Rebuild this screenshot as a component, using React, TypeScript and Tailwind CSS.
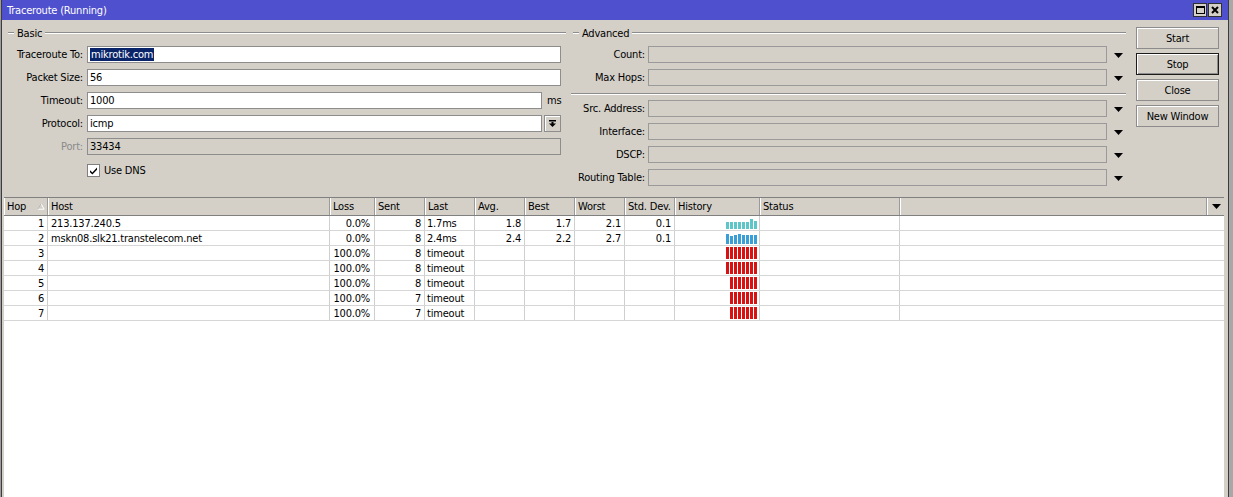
import React from 'react';

type Row = {
  hop: string;
  host: string;
  loss: string;
  sent: string;
  last: string;
  avg: string;
  best: string;
  worst: string;
  std: string;
  kind: 'cyan' | 'blue' | 'red';
  bars: number[];
};

const ROWS: Row[] = [
  { hop: '1', host: '213.137.240.5', loss: '0.0%', sent: '8', last: '1.7ms', avg: '1.8', best: '1.7', worst: '2.1', std: '0.1', kind: 'cyan', bars: [7, 7, 7, 7, 7, 7, 10, 8] },
  { hop: '2', host: 'mskn08.slk21.transtelecom.net', loss: '0.0%', sent: '8', last: '2.4ms', avg: '2.4', best: '2.2', worst: '2.7', std: '0.1', kind: 'blue', bars: [10, 8, 9, 10, 9, 9, 9, 9] },
  { hop: '3', host: '', loss: '100.0%', sent: '8', last: 'timeout', avg: '', best: '', worst: '', std: '', kind: 'red', bars: [12, 12, 12, 12, 12, 12, 12, 12] },
  { hop: '4', host: '', loss: '100.0%', sent: '8', last: 'timeout', avg: '', best: '', worst: '', std: '', kind: 'red', bars: [12, 12, 12, 12, 12, 12, 12, 12] },
  { hop: '5', host: '', loss: '100.0%', sent: '8', last: 'timeout', avg: '', best: '', worst: '', std: '', kind: 'red', bars: [12, 12, 12, 12, 12, 12, 12] },
  { hop: '6', host: '', loss: '100.0%', sent: '7', last: 'timeout', avg: '', best: '', worst: '', std: '', kind: 'red', bars: [12, 12, 12, 12, 12, 12, 12] },
  { hop: '7', host: '', loss: '100.0%', sent: '7', last: 'timeout', avg: '', best: '', worst: '', std: '', kind: 'red', bars: [12, 12, 12, 12, 12, 12, 12] },
];

const BAR_COLOR = {
  cyan: 'bg-[#5cc6c8]',
  blue: 'bg-[#3a9fd6]',
  red: 'bg-[#d81212]',
};

// column widths, header + body share them
const COLS = [
  { label: 'Hop', w: 'w-[44px]' },
  { label: 'Host', w: 'w-[282px]' },
  { label: 'Loss', w: 'w-[45px]' },
  { label: 'Sent', w: 'w-[50px]' },
  { label: 'Last', w: 'w-[50px]' },
  { label: 'Avg.', w: 'w-[50px]' },
  { label: 'Best', w: 'w-[50px]' },
  { label: 'Worst', w: 'w-[50px]' },
  { label: 'Std. Dev.', w: 'w-[50px]' },
  { label: 'History', w: 'w-[85px]' },
  { label: 'Status', w: 'w-[140px]' },
];

function DownTriangle() {
  return (
    <svg width="9" height="5" viewBox="0 0 9 5">
      <path d="M0 0H9L4.5 5Z" fill="#000" />
    </svg>
  );
}

function Legend({ title, indent }: { title: string; indent: string }) {
  return (
    <div className="flex h-[14px] items-center">
      <div className={`${indent} h-[2px] w-[6px] border-t border-b border-t-[#8c8c8c] border-b-white`} />
      <span className="px-[3px]">{title}</span>
      <div className="h-[2px] flex-1 border-t border-b border-t-[#8c8c8c] border-b-white" />
    </div>
  );
}

function Label({ children, className = '' }: { children: React.ReactNode; className?: string }) {
  return <div className={`shrink-0 text-right ${className}`}>{children}</div>;
}

function BasicGroup() {
  const input = 'h-[17px] flex-1 border border-[#8d8d8d] bg-white pl-[2px] flex items-center';
  return (
    <div className="ml-[2px] flex w-[562px] flex-col">
      <Legend title="Basic" indent="ml-[4px]" />
      <div className="mt-[6px] flex flex-col gap-[6px] pr-[5px]">
        <div className="flex h-[17px] items-center gap-[4px]">
          <Label className="w-[79px]">Traceroute To:</Label>
          <div className={input}>
            <span className="bg-[#0a246a] px-[1px] leading-[13px] text-white">mikrotik.com</span>
          </div>
        </div>
        <div className="flex h-[17px] items-center gap-[4px]">
          <Label className="w-[79px]">Packet Size:</Label>
          <div className={input}>56</div>
        </div>
        <div className="flex h-[17px] items-center gap-[4px]">
          <Label className="w-[79px]">Timeout:</Label>
          <div className={input}>1000</div>
          <span className="w-[15px] pl-[1px]">ms</span>
        </div>
        <div className="flex h-[17px] items-center gap-[4px]">
          <Label className="w-[79px]">Protocol:</Label>
          <div className={input}>icmp</div>
          <div className="-ml-[2px] flex h-[17px] w-[17px] items-center justify-center border border-[#8d8d8d] bg-[#d4d0c8] shadow-[inset_1px_1px_0_#ffffff]">
            <svg width="9" height="9" viewBox="0 0 9 9">
              <rect x="1" y="1" width="7" height="1.5" fill="#000" />
              <rect x="3.5" y="3" width="2" height="2" fill="#000" />
              <path d="M1 4.5H8L4.5 8Z" fill="#000" />
            </svg>
          </div>
        </div>
        <div className="flex h-[17px] items-center gap-[4px]">
          <Label className="w-[79px] text-[#8a8a8a]">Port:</Label>
          <div className="flex h-[17px] flex-1 items-center border border-[#8d8d8d] bg-[#d4d0c8] pl-[2px]">33434</div>
        </div>
        <div className="mt-[1px] flex h-[17px] items-center gap-[4px]">
          <div className="w-[79px]" />
          <div className="flex h-[13px] w-[13px] items-center justify-center border border-[#808080] bg-white">
            <svg width="9" height="9" viewBox="0 0 9 9">
              <path d="M1 4.2L3.4 6.6L8 1.6V3.8L3.4 8.6L1 6.2Z" fill="#000" />
            </svg>
          </div>
          <span>Use DNS</span>
        </div>
      </div>
    </div>
  );
}

function AdvRow({ label }: { label: string }) {
  return (
    <div className="flex h-[17px] items-center gap-[3px]">
      <Label className="w-[74px]">{label}</Label>
      <div className="h-[17px] w-[459px] border border-[#9a9a9a] bg-[#d4d0c8]" />
      <div className="flex flex-1 justify-center pt-[1px]">
        <DownTriangle />
      </div>
    </div>
  );
}

function AdvancedGroup() {
  return (
    <div className="ml-[5px] flex w-[555px] flex-col">
      <Legend title="Advanced" indent="ml-[2px]" />
      <div className="mt-[6px] flex flex-col gap-[6px]">
        <AdvRow label="Count:" />
        <AdvRow label="Max Hops:" />
      </div>
      <div className="mt-[7px] mb-[5px] h-[2px] border-t border-b border-t-[#8c8c8c] border-b-white" />
      <div className="flex flex-col gap-[6px]">
        <AdvRow label="Src. Address:" />
        <AdvRow label="Interface:" />
        <AdvRow label="DSCP:" />
        <AdvRow label="Routing Table:" />
      </div>
    </div>
  );
}

function Buttons() {
  const btn = 'flex h-[22px] items-center justify-center border bg-[#d4d0c8]';
  return (
    <div className="ml-[10px] mt-[1px] flex w-[83px] flex-col gap-[4px]">
      <div className={`${btn} border-[#8c8c8c] shadow-[inset_1px_1px_0_#ffffff]`}>Start</div>
      <div className={`${btn} border-[#1c1c1c] shadow-[inset_1px_1px_0_#ffffff,inset_-1px_-1px_0_#8c8c8c]`}>Stop</div>
      <div className={`${btn} border-[#8c8c8c] shadow-[inset_1px_1px_0_#ffffff]`}>Close</div>
      <div className={`${btn} border-[#8c8c8c] shadow-[inset_1px_1px_0_#ffffff]`}>New Window</div>
    </div>
  );
}

function TitleBar() {
  return (
    <div className="flex h-[20px] shrink-0 items-center bg-[#4f50cd] pl-[5px] pr-[6px] text-white">
      <span className="flex-1">Traceroute (Running)</span>
      <div className="flex gap-[1px]">
        <div className="flex h-[14px] w-[14px] items-center justify-center border border-[#303030] bg-[#d4d0c8]">
          <div className="h-[8px] w-[9px] border border-t-2 border-black" />
        </div>
        <div className="flex h-[14px] w-[14px] items-center justify-center border border-[#303030] bg-[#d4d0c8]">
          <svg width="8" height="8" viewBox="0 0 8 8">
            <path d="M1 1L7 7M7 1L1 7" stroke="#000" strokeWidth="2" />
          </svg>
        </div>
      </div>
    </div>
  );
}

function Table() {
  const right = 'justify-end pr-[3px]';
  const left = 'pl-[2px]';
  return (
    <div className="ml-[2px] flex w-[1220px] flex-1 flex-col bg-white">
      <div className="flex h-[19px] shrink-0 border-t border-b border-[#808080] bg-[#d4d0c8]">
        {COLS.map((c, i) => (
          <div
            key={c.label}
            className={`flex ${c.w} shrink-0 items-center border-l border-r border-l-white border-r-[#9a9a9a] pl-[2px]`}
          >
            <span className="flex-1">{c.label}</span>
            {i === 0 && (
              <svg className="mr-[2px]" width="8" height="7" viewBox="0 0 8 7">
                <path d="M4 0.8L7.2 6.2H0.8Z" fill="none" stroke="#ffffff" strokeWidth="1" />
                <path d="M4 0.8L0.8 6.2" fill="none" stroke="#9a9a9a" strokeWidth="0.8" />
              </svg>
            )}
          </div>
        ))}
        <div className="flex-1 border-l border-r border-l-white border-r-[#9a9a9a]" />
        <div className="flex w-[17px] shrink-0 items-center justify-center border-l border-l-white">
          <DownTriangle />
        </div>
      </div>
      {ROWS.map((r) => (
        <div key={r.hop} className="flex h-[15px] shrink-0 border-b border-[#d6d6d6]">
          <div className={`flex w-[44px] items-center border-r border-[#cfcfcf] ${right} pr-[2px]`}>{r.hop}</div>
          <div className={`flex w-[282px] items-center border-r border-[#cfcfcf] ${left} pl-[3px]`}>{r.host}</div>
          <div className={`flex w-[45px] items-center border-r border-[#cfcfcf] ${right} pr-[4px]`}>{r.loss}</div>
          <div className={`flex w-[50px] items-center border-r border-[#cfcfcf] ${right}`}>{r.sent}</div>
          <div className={`flex w-[50px] items-center border-r border-[#cfcfcf] ${left}`}>{r.last}</div>
          <div className={`flex w-[50px] items-center border-r border-[#cfcfcf] ${right}`}>{r.avg}</div>
          <div className={`flex w-[50px] items-center border-r border-[#cfcfcf] ${right}`}>{r.best}</div>
          <div className={`flex w-[50px] items-center border-r border-[#cfcfcf] ${right}`}>{r.worst}</div>
          <div className={`flex w-[50px] items-center border-r border-[#cfcfcf] ${right}`}>{r.std}</div>
          <div className="flex w-[85px] items-end justify-end gap-[1px] border-r border-[#cfcfcf] pr-[2px] pb-[1px]">
            {r.bars.map((h, i) => (
              <div key={i} className={`w-[3px] ${BAR_COLOR[r.kind]}`} style={{ height: h }} />
            ))}
          </div>
          <div className="w-[140px] border-r border-[#cfcfcf]" />
          <div className="flex-1" />
        </div>
      ))}
    </div>
  );
}

export default function App() {
  return (
    <div className="flex h-[497px] w-[1233px] overflow-hidden bg-[#9d9d9d] pl-[1px] font-['DejaVu_Sans_Condensed','Liberation_Sans',sans-serif] text-[11px] leading-[13px] tracking-[-0.2px] text-black">
      <div className="flex h-full w-[1228px] shrink-0 flex-col border-l border-r border-[#3c3c3c] bg-[#d4d0c8]">
        <TitleBar />
        <div className="flex h-[177px] shrink-0 pt-[6px]">
          <BasicGroup />
          <AdvancedGroup />
          <Buttons />
        </div>
        <Table />
      </div>
      <div className="flex-1 bg-[#a8a8a8]" />
    </div>
  );
}
